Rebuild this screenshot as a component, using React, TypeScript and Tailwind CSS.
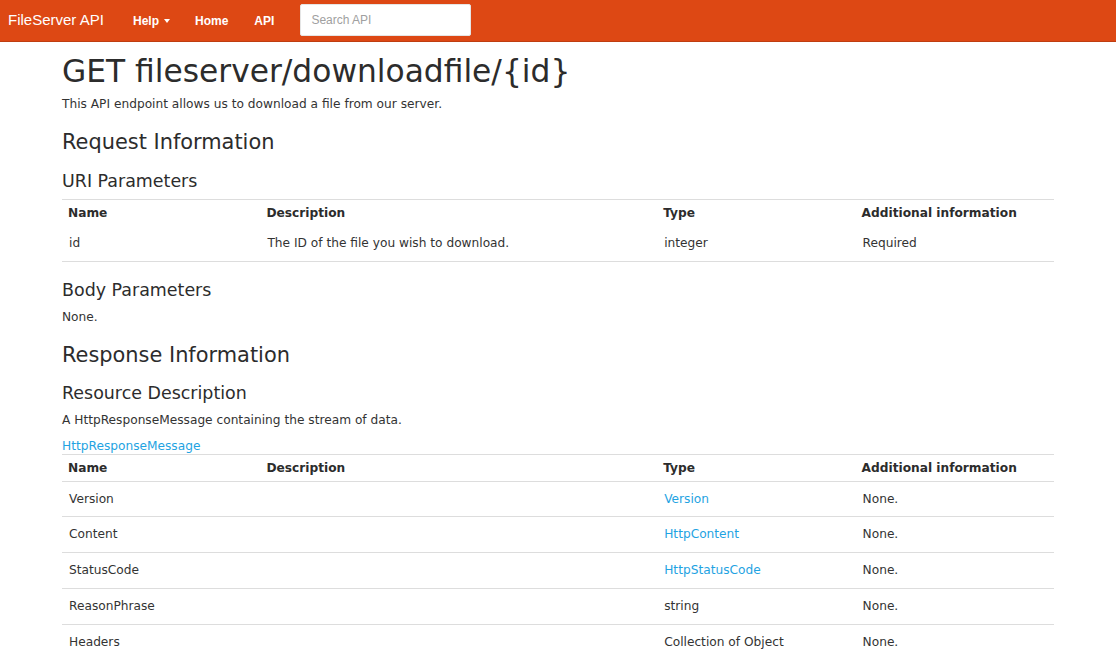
import React from "react";

type Row = {
  name: string;
  description: string;
  type: string;
  typeLink?: boolean;
  info: string;
};

const uriParams: Row[] = [
  { name: "id", description: "The ID of the file you wish to download.", type: "integer", info: "Required" },
];

const responseRows: Row[] = [
  { name: "Version", description: "", type: "Version", typeLink: true, info: "None." },
  { name: "Content", description: "", type: "HttpContent", typeLink: true, info: "None." },
  { name: "StatusCode", description: "", type: "HttpStatusCode", typeLink: true, info: "None." },
  { name: "ReasonPhrase", description: "", type: "string", info: "None." },
  { name: "Headers", description: "", type: "Collection of Object", info: "None." },
];

function Navbar() {
  return (
    <nav className="h-[42px] bg-[#dd4814] border-b border-[#bf3e11] flex items-center font-['Liberation_Sans',Arial,sans-serif] text-white">
      <a className="pl-[8px] text-[15px] w-[125px]">FileServer API</a>
      <a className="ml-[8px] text-[12px] font-bold flex items-center">
        Help
        <span className="ml-[5px] mt-[1px] w-0 h-0 border-l-[3.5px] border-r-[3.5px] border-t-[4px] border-l-transparent border-r-transparent border-t-white" />
      </a>
      <a className="ml-[25px] text-[12px] font-bold">Home</a>
      <a className="ml-[26px] text-[12px] font-bold">API</a>
      <input
        placeholder="Search API"
        className="ml-[26px] mb-[1px] w-[171px] h-[32px] bg-white rounded-[2px] border border-[#e5e5e5] px-[10px] text-[12px] text-[#333] placeholder:text-[#a0a0a0] outline-none"
      />
    </nav>
  );
}

function ParamTable({ rows, headerBorder }: { rows: Row[]; headerBorder: boolean }) {
  return (
    <table className="w-full table-fixed border-collapse text-[12.2px] leading-[17px]">
      <colgroup>
        <col className="w-[20%]" />
        <col className="w-[40%]" />
        <col className="w-[20%]" />
        <col className="w-[20%]" />
      </colgroup>
      <thead>
        <tr className="border-t border-[#dddddd]">
          <th className="text-left font-bold pt-[5px] pb-[4px] px-[6px] text-[#2c2c2c]">Name</th>
          <th className="text-left font-bold pt-[5px] pb-[4px] px-[6px] text-[#2c2c2c]">Description</th>
          <th className="text-left font-bold pt-[5px] pb-[4px] px-[6px] text-[#2c2c2c]">Type</th>
          <th className="text-left font-bold pt-[5px] pb-[4px] px-[6px] text-[#2c2c2c]">Additional information</th>
        </tr>
      </thead>
      <tbody>
        {rows.map((r, i) => {
          // first row under a bordered header is a pixel shorter in the original
          const pad = headerBorder && i === 0 ? "pt-[9px] pb-[8px] px-[7px]" : "py-[9px] px-[7px]";
          return (
            <tr
              key={r.name}
              className={headerBorder || i > 0 ? "border-t border-[#dddddd]" : ""}
            >
              <td className={pad}>{r.name}</td>
              <td className={pad}>{r.description}</td>
              <td className={pad}>
                {r.typeLink ? <a className="text-[#1fa3e2]">{r.type}</a> : r.type}
              </td>
              <td className={pad}>{r.info}</td>
            </tr>
          );
        })}
        {!headerBorder && (
          <tr className="border-t border-[#dddddd]">
            <td colSpan={4} className="p-0 h-0" />
          </tr>
        )}
      </tbody>
    </table>
  );
}

export default function App() {
  return (
    <div className="min-h-screen bg-white font-['DejaVu_Sans',Verdana,sans-serif] text-[#333333]">
      <Navbar />
      <div className="w-[992px] mx-auto">
        <h1 className="mt-[12px] text-[31.3px] leading-[34px] text-[#2c2c2c]">GET fileserver/downloadfile/{"{id}"}</h1>
        <p className="mt-[8px] text-[12.2px] leading-[17px]">This API endpoint allows us to download a file from our server.</p>

        <h2 className="mt-[18px] text-[20.9px] leading-[23px] text-[#2c2c2c]">Request Information</h2>
        <h3 className="mt-[18px] text-[17.45px] leading-[19px] text-[#2c2c2c]">URI Parameters</h3>
        <div className="mt-[8px]">
          <ParamTable rows={uriParams} headerBorder={false} />
        </div>

        <h3 className="mt-[19px] text-[17.45px] leading-[19px] text-[#2c2c2c]">Body Parameters</h3>
        <p className="mt-[9px] text-[12.2px] leading-[17px]">None.</p>

        <h2 className="mt-[18px] text-[20.9px] leading-[23px] text-[#2c2c2c]">Response Information</h2>
        <h3 className="mt-[17px] text-[17.45px] leading-[19px] text-[#2c2c2c]">Resource Description</h3>
        <p className="mt-[9px] text-[12.2px] leading-[17px]">A HttpResponseMessage containing the stream of data.</p>
        <p className="mt-[9px] text-[12.2px] leading-[16px]">
          <a className="text-[#1fa3e2]">HttpResponseMessage</a>
        </p>
        <ParamTable rows={responseRows} headerBorder={true} />
      </div>
    </div>
  );
}
